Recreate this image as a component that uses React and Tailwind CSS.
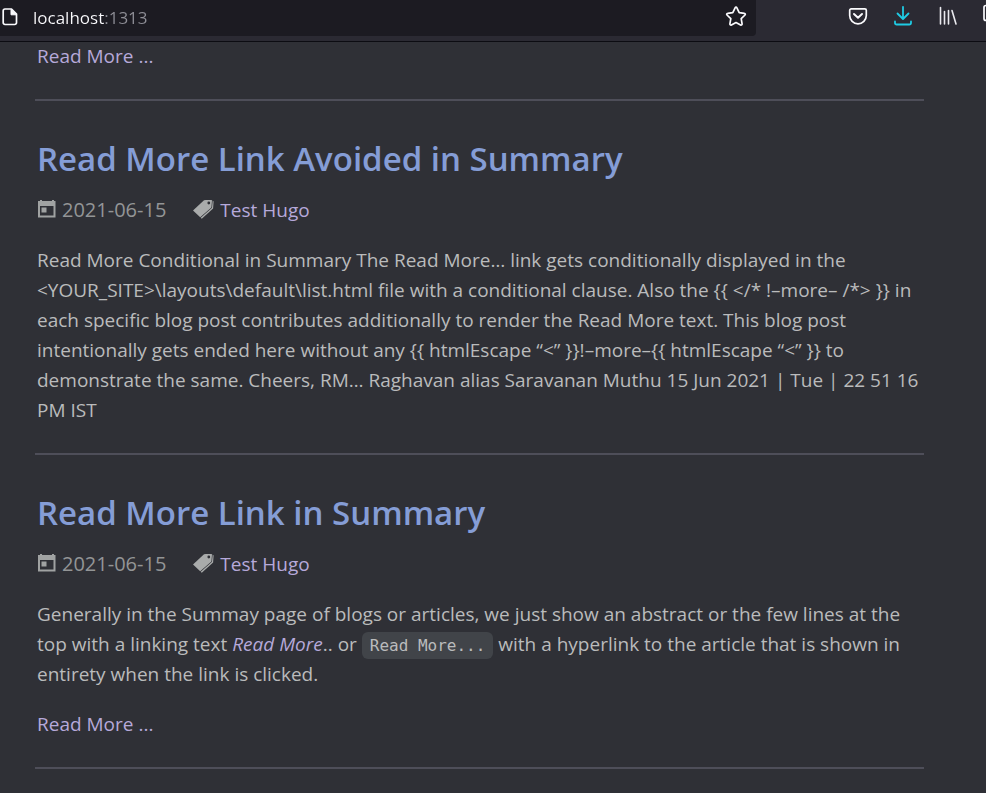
import React from "react";

function PageIcon() {
  return (
    <svg className="size-5 shrink-0" viewBox="0 0 20 20" fill="none" stroke="#fbfbfe" strokeWidth="1.7" strokeLinejoin="round" aria-hidden="true">
      <path d="M5 1.300h6.500l5 5v8.700a1.800 1.800 0 0 1-1.800 1.800H5A1.800 1.800 0 0 1 3.200 15V3.100A1.800 1.800 0 0 1 5 1.300z" transform="translate(0 -.3)" />
      <path d="M11 1.500v5.300h5.500z" fill="#fbfbfe" strokeWidth="1" />
    </svg>
  );
}

function StarIcon() {
  return (
    <svg className="size-6" viewBox="0 0 24 24" fill="none" stroke="#fbfbfe" strokeWidth="1.7" strokeLinejoin="round" aria-hidden="true">
      <path d="M12 1.200c.4 0 .7.200.9.600l2.300 4.800 5.200.700c.9.100 1.200 1.100.6 1.700l-3.800 3.700.9 5.200c.1.900-.7 1.500-1.500 1.100L12 16.500l-4.600 2.500c-.8.400-1.600-.2-1.500-1.100l.9-5.200L3 9c-.6-.6-.3-1.600.6-1.700l5.200-.7 2.300-4.800c.2-.4.500-.6.900-.6z" />
    </svg>
  );
}

function PocketIcon() {
  return (
    <svg className="size-6" viewBox="0 0 24 24" fill="none" stroke="#fbfbfe" strokeWidth="1.700" strokeLinecap="round" strokeLinejoin="round" aria-hidden="true">
      <path d="M5.200 4.800h13.600a1.500 1.500 0 0 1 1.500 1.500v5.200a8.300 8.300 0 0 1-16.600 0V6.300a1.500 1.500 0 0 1 1.500-1.500z" />
      <path d="M8 10l4 3.700 4-3.700" strokeWidth="2" />
    </svg>
  );
}

function DownloadIcon() {
  return (
    <svg className="size-6" viewBox="0 0 24 24" fill="none" stroke="#1fcbe4" strokeWidth="1.800" strokeLinecap="round" strokeLinejoin="round" aria-hidden="true">
      <path d="M12 2.800v12M6.500 9.500l5.500 5.500 5.500-5.500" />
      <path d="M4 17.500v1.200a1.800 1.800 0 0 0 1.800 1.800h12.400a1.800 1.800 0 0 0 1.800-1.800v-1.200" />
    </svg>
  );
}

function LibraryIcon() {
  return (
    <svg className="size-6" viewBox="0 0 24 24" fill="none" stroke="#e9e9ee" strokeWidth="1.600" strokeLinecap="round" aria-hidden="true">
      <path d="M4.500 3.500v16.500M8.500 7.500v12.500M12.500 6.500v13.500M16 6.500l4 13.500" />
    </svg>
  );
}

function SidebarIcon() {
  return (
    <svg className="size-6" viewBox="0 0 24 24" fill="none" stroke="#fbfbfe" strokeWidth="1.700" aria-hidden="true">
      <rect x="3" y="4.500" width="18" height="15" rx="2" />
      <path d="M12 4.500v15" />
    </svg>
  );
}

function CalendarIcon() {
  return (
    <svg className="size-5 shrink-0" viewBox="0 0 20 20" fill="#a0a2a2" aria-hidden="true">
      <path fillRule="evenodd" d="M3 0h2v1h10V0h2v1h1.500v16.500H1V1h2zM3 6v9.500h13.500V6z" />
      <path d="M4.500 7.500h5v5h-5z" />
    </svg>
  );
}

function TagsIcon() {
  return (
    <svg className="h-5 w-6 shrink-0" viewBox="0 0 24 20" fill="#a9abab" aria-hidden="true">
      <path fillRule="evenodd" d="M12 .2L19 -.6l1 1-.6 7L8.200 17.200 1 10.500zM16.800 1.600a1.400 1.400 0 1 0 .01 2.800 1.400 1.400 0 0 0-.01-2.800z" />
      <path d="M20.700 .6l.9 1-.5 6.800-11.300 10.400-1.100-1 11.300-10z" />
    </svg>
  );
}

function ToolButton({ label, children }) {
  return (
    <button type="button" aria-label={label} className="shrink-0">
      {children}
    </button>
  );
}

function BrowserBar() {
  return (
    <header className="flex h-[42px] items-start overflow-hidden border-b border-[#0c0c12] bg-[#2b2a33]">
      <div className="flex h-9 min-w-0 grow items-center rounded-br bg-[#1c1b22] pr-2">
        <PageIcon />
        <input
          aria-label="Address"
          defaultValue="localhost:1313"
          className="ml-[13px] h-9 min-w-0 grow bg-[linear-gradient(90deg,#fbfbfe_71px,#8f8f97_71px)] bg-clip-text pb-0.5 text-[17px] text-transparent outline-none"
        />
        <ToolButton label="Bookmark this page"><StarIcon /></ToolButton>
      </div>
      <nav aria-label="Toolbar" className="-mr-2 ml-[90px] flex h-8 shrink-0 items-center gap-[21px]">
        <ToolButton label="Save to Pocket"><PocketIcon /></ToolButton>
        <ToolButton label="Downloads"><DownloadIcon /></ToolButton>
        <ToolButton label="Library"><LibraryIcon /></ToolButton>
        <div className="w-[13px] overflow-hidden">
          <ToolButton label="Sidebars"><SidebarIcon /></ToolButton>
        </div>
      </nav>
    </header>
  );
}

function Divider() {
  return <hr className="my-7 -ml-0.5 border-t-2 border-[#4e4e59]" />;
}

function ReadMore() {
  return (
    <a href="#more" className="block w-fit text-[#b6a9da]">Read More ...</a>
  );
}

function Post({ title, children }) {
  return (
    <article>
      <h2 className="mb-3 pt-1.5 text-[33px] leading-12 font-semibold text-[#859dd6]">
        <a href="#post">{title}</a>
      </h2>
      <div className="mb-5 flex items-center">
        <CalendarIcon />
        <time dateTime="2021-06-15" className="ml-[5px] text-[20px] text-[#939596]">2021-06-15</time>
        <span className="ml-[26px]"><TagsIcon /></span>
        <a href="#tag" className="ml-1 text-[#b6a9da]">Test Hugo</a>
      </div>
      {children}
    </article>
  );
}

export default function App() {
  return (
    <div className="min-h-screen bg-[#2f3036] font-['Open_Sans','Noto_Sans',sans-serif] text-[#babbbc]">
      <BrowserBar />
      <main className="-mt-px pr-[62px] pl-[37px] text-[19px] leading-[30px]">
        <ReadMore />
        <Divider />
        <Post title="Read More Link Avoided in Summary">
          <p>
            Read More Conditional in Summary The Read More… link gets conditionally displayed in the
            &lt;YOUR_SITE&gt;\layouts\default\list.html file with a conditional clause. Also the {"{{ </* !–more– /*> }}"} in
            each specific blog post contributes additionally to render the Read More text. This blog post
            intentionally gets ended here without any {"{{ htmlEscape “<” }}!–more–{{ htmlEscape “<” }}"} to
            demonstrate the same. Cheers, RM… Raghavan alias Saravanan Muthu 15 Jun 2021 | Tue | 22 51 16
            PM IST
          </p>
        </Post>
        <Divider />
        <Post title="Read More Link in Summary">
          <p className="mb-5">
            Generally in the Summay page of blogs or articles, we just show an abstract or the few lines at the
            top with a linking text <a href="#more" className="text-[#b6a9da] italic">Read More</a>.. or{" "}
            <code className="rounded-md bg-[#414449] px-2 py-1 font-['DejaVu_Sans_Mono',monospace] text-[16px] leading-none">Read More...</code>{" "}
            with a hyperlink to the article that is shown in
            entirety when the link is clicked.
          </p>
          <ReadMore />
        </Post>
        <Divider />
      </main>
    </div>
  );
}
